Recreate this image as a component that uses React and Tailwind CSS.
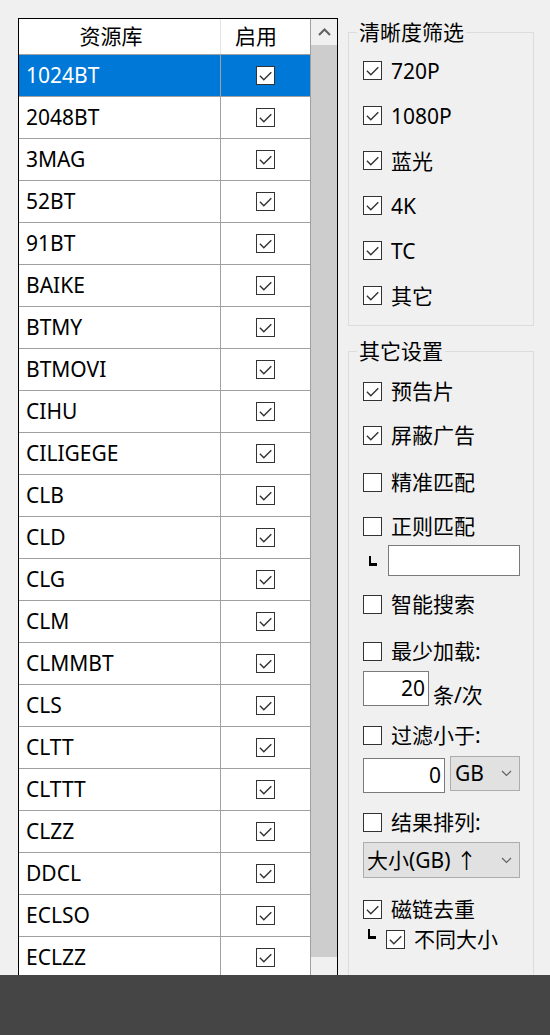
import React from 'react';

const sources = [
  '1024BT', '2048BT', '3MAG', '52BT', '91BT', 'BAIKE', 'BTMY', 'BTMOVI', 'CIHU', 'CILIGEGE', 'CLB',
  'CLD', 'CLG', 'CLM', 'CLMMBT', 'CLS', 'CLTT', 'CLTTT', 'CLZZ', 'DDCL', 'ECLSO', 'ECLZZ',
];

function Box({ checked }) {
  return (
    <span className="w-[19px] h-[19px] shrink-0 border border-[#333333] bg-white flex items-center justify-center">
      {checked && (
        <svg width="17" height="17" viewBox="0 0 17 17">
          <path d="M2.9 8.8 L6.8 12.7 L14.3 5.2" fill="none" stroke="#333333" strokeWidth="1.4" />
        </svg>
      )}
    </span>
  );
}

function Check({ label, checked, className = '' }) {
  return (
    <div className={`flex items-center h-[34px] pl-[14px] gap-[9px] ${className}`}>
      <Box checked={checked} />
      <span className="leading-[34px] whitespace-nowrap">{label}</span>
    </div>
  );
}

function Corner({ className = '' }) {
  return <span className={`block w-[8px] h-[10px] border-l-[2px] border-b-[3px] border-black shrink-0 ${className}`} />;
}

function Chevron() {
  return (
    <svg width="11" height="7" viewBox="0 0 11 7" className="shrink-0">
      <path d="M1 1 L5.5 5.5 L10 1" fill="none" stroke="#606060" strokeWidth="1.2" />
    </svg>
  );
}

export default function App() {
  return (
    <div
      className="w-[550px] h-[1035px] bg-[#f0f0f0] flex flex-col overflow-hidden text-[21px] text-black"
      style={{ fontFamily: '"Noto Sans", "Noto Sans CJK SC", sans-serif' }}
    >
      <div className="h-[975px] overflow-hidden flex items-start pl-[18px] pt-[18px] gap-[10px]">
        {/* 资源库 table */}
        <div className="w-[320px] border border-black flex shrink-0">
          <div className="w-[292px] bg-white">
            <div className="flex h-[36px] border-b border-[#a0a0a0]">
              <div className="w-[202px] border-r border-[#e3e3e3] flex items-center justify-center pr-[17px] leading-[35px]">
                资源库
              </div>
              <div className="w-[90px] border-r border-[#a0a0a0] flex items-center justify-center pr-[19px] leading-[35px]">
                启用
              </div>
            </div>
            {sources.map((name, i) => (
              <div
                key={name}
                className={`flex h-[42px] border-b border-[#a0a0a0] ${i === 0 ? 'bg-[#0078d7] text-white' : ''}`}
              >
                <div className="w-[202px] border-r border-[#a0a0a0] pl-[7px] flex items-center leading-[41px]">
                  {name}
                </div>
                <div className="w-[90px] border-r border-[#a0a0a0] flex items-center justify-center">
                  <Box checked />
                </div>
              </div>
            ))}
          </div>
          {/* scrollbar */}
          <div className="w-[26px] bg-[#f0f0f0] flex flex-col">
            <div className="h-[26px] flex items-center justify-center">
              <svg width="13" height="8" viewBox="0 0 13 8">
                <path d="M1 7 L6.5 1.5 L12 7" fill="none" stroke="#606060" strokeWidth="2" />
              </svg>
            </div>
            <div className="h-[912px] bg-[#cdcdcd]" />
          </div>
        </div>

        {/* right column */}
        <div className="w-[186px] shrink-0 flex flex-col">
          <fieldset className="border border-[#dcdcdc] pb-[7px]">
            <legend className="ml-[8px] px-[2px] leading-[29px]">清晰度筛选</legend>
            <div className="pt-[1px]">
              {['720P', '1080P', '蓝光', '4K', 'TC', '其它'].map((t) => (
                <div key={t} className="h-[45px] flex items-center">
                  <Check label={t} checked />
                </div>
              ))}
            </div>
          </fieldset>

          <fieldset className="border border-[#dcdcdc] mt-[11px] h-[700px]">
            <legend className="ml-[8px] px-[2px] leading-[29px]">其它设置</legend>
            <Check label="预告片" checked className="mt-[8px]" />
            <Check label="屏蔽广告" checked className="mt-[10px]" />
            <Check label="精准匹配" className="mt-[13px]" />
            <Check label="正则匹配" className="mt-[10px]" />
            <div className="flex items-center pl-[14px] mt-[2px]">
              <Corner className="ml-[6px]" />
              <div className="ml-[11px] w-[132px] h-[31px] border border-[#7a7a7a] bg-white" />
            </div>
            <Check label="智能搜索" className="mt-[11px]" />
            <Check label="最少加载:" className="mt-[13px]" />
            <div className="flex items-end pl-[14px] mt-[3px] h-[35px]">
              <div className="w-[66px] h-[35px] border border-[#7a7a7a] bg-white flex items-center justify-end pr-[3px] leading-[33px]">
                20
              </div>
              <span className="ml-[4px] leading-[30px] -mb-[4px]">条/次</span>
            </div>
            <Check label="过滤小于:" className="mt-[12px]" />
            <div className="flex items-start pl-[14px] mt-[4px] h-[36px]">
              <div className="mt-[2px] w-[82px] h-[35px] border border-[#7a7a7a] bg-white flex items-center justify-end pr-[3px] leading-[33px]">
                0
              </div>
              <div className="ml-[5px] w-[70px] h-[35px] border border-[#adadad] bg-[#e1e1e1] flex items-center justify-between pl-[4px] pr-[7px] leading-[33px]">
                <span>GB</span>
                <Chevron />
              </div>
            </div>
            <Check label="结果排列:" className="mt-[13px]" />
            <div className="pl-[14px] mt-[3px]">
              <div className="w-[157px] h-[36px] border border-[#adadad] bg-[#e1e1e1] flex items-center justify-between pl-[3px] pr-[7px] leading-[34px]">
                <span className="whitespace-nowrap">大小(GB) ↑</span>
                <Chevron />
              </div>
            </div>
            <Check label="磁链去重" checked className="mt-[14px]" />
            <div className="flex items-start pl-[14px] h-[24px] pt-[3px]">
              <Corner className="ml-[5px]" />
              <div className="ml-[10px] flex items-center gap-[9px] -mt-[7px] h-[34px]">
                <Box checked />
                <span className="leading-[34px]">不同大小</span>
              </div>
            </div>
            <div className="flex items-center h-[34px] pl-[14px] mt-[17px]">
              <Box />
            </div>
          </fieldset>
        </div>
      </div>
      <div className="h-[60px] bg-[#454545] shrink-0" />
    </div>
  );
}
